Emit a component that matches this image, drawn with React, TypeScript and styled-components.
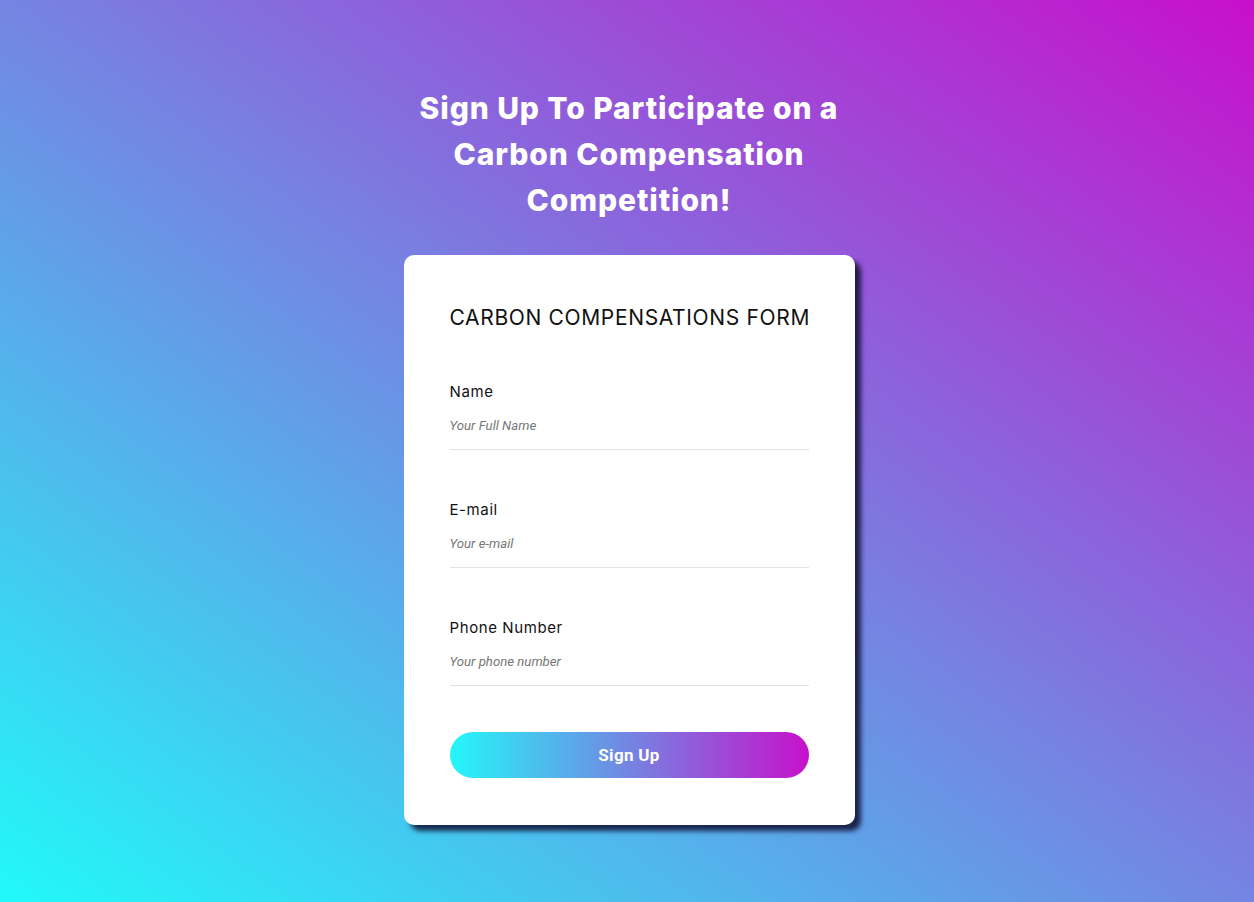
import React from "react";
import styled, { createGlobalStyle } from "styled-components";

const Global = createGlobalStyle`
  * { box-sizing: border-box; }
  html, body { margin: 0; padding: 0; }
  body { font-family: "Inter", "Noto Sans", sans-serif; }
`;

const Page = styled.div`
  min-height: 902px;
  background: linear-gradient(to top right, #21f9f9 0%, #c80fcb 100%);
  display: flex;
  flex-direction: column;
  align-items: center;
  padding: 85px 0 0 4px;
`;

const Heading = styled.h1`
  margin: 0;
  width: 470px;
  text-align: center;
  color: #ffffff;
  font-family: "Inter", "Noto Sans", sans-serif;
  font-weight: 800;
  font-size: 30px;
  line-height: 46px;
  letter-spacing: 0.9px;
`;

const Card = styled.form`
  margin-top: 32px;
  width: 451px;
  background: #ffffff;
  border-radius: 10px;
  box-shadow: 6px 6px 5px rgba(15, 15, 50, 0.85);
  padding: 46px 46px 47px;
  display: flex;
  flex-direction: column;
`;

const FormTitle = styled.h2`
  margin: 0 0 47px;
  font-family: "Inter", "Noto Sans", sans-serif;
  font-weight: 400;
  font-size: 21px;
  line-height: 33px;
  letter-spacing: 0.65px;
  color: #111111;
  white-space: nowrap;
`;

const Fields = styled.div`
  display: flex;
  flex-direction: column;
  gap: 49px;
`;

const Field = styled.div`
  display: flex;
  flex-direction: column;
`;

const Label = styled.label`
  font-family: "Inter", "Noto Sans", sans-serif;
  font-size: 15px;
  line-height: 22px;
  letter-spacing: 0.6px;
  color: #111111;
  margin-bottom: 8px;
`;

const Input = styled.input`
  display: block;
  width: 100%;
  border: none;
  border-bottom: 1px solid #e2e2e2;
  outline: none;
  padding: 6px 0 14px;
  font-family: "Roboto", "Liberation Sans", sans-serif;
  font-size: 13.2px;
  line-height: 18px;
  color: #333;
  background: transparent;
  &::placeholder {
    color: #777777;
    font-style: italic;
  }
`;

const Button = styled.button`
  margin-top: 46px;
  height: 46px;
  width: 100%;
  border: none;
  border-radius: 23px;
  background: linear-gradient(to right, #23f7f9 0%, #c711cb 100%);
  color: #ffffff;
  font-family: "Roboto", "Liberation Sans", sans-serif;
  font-weight: 700;
  font-size: 17px;
  letter-spacing: 0.3px;
  cursor: pointer;
`;

const fields = [
  { id: "name", label: "Name", placeholder: "Your Full Name", type: "text" },
  { id: "email", label: "E-mail", placeholder: "Your e-mail", type: "email" },
  { id: "phone", label: "Phone Number", placeholder: "Your phone number", type: "tel" },
];

export default function App() {
  return (
    <>
      <Global />
      <Page>
        <Heading>Sign Up To Participate on a Carbon Compensation Competition!</Heading>
        <Card onSubmit={(e) => e.preventDefault()}>
          <FormTitle>CARBON COMPENSATIONS FORM</FormTitle>
          <Fields>
            {fields.map((f) => (
              <Field key={f.id}>
                <Label htmlFor={f.id}>{f.label}</Label>
                <Input id={f.id} type={f.type} placeholder={f.placeholder} />
              </Field>
            ))}
          </Fields>
          <Button type="submit">Sign Up</Button>
        </Card>
      </Page>
    </>
  );
}
